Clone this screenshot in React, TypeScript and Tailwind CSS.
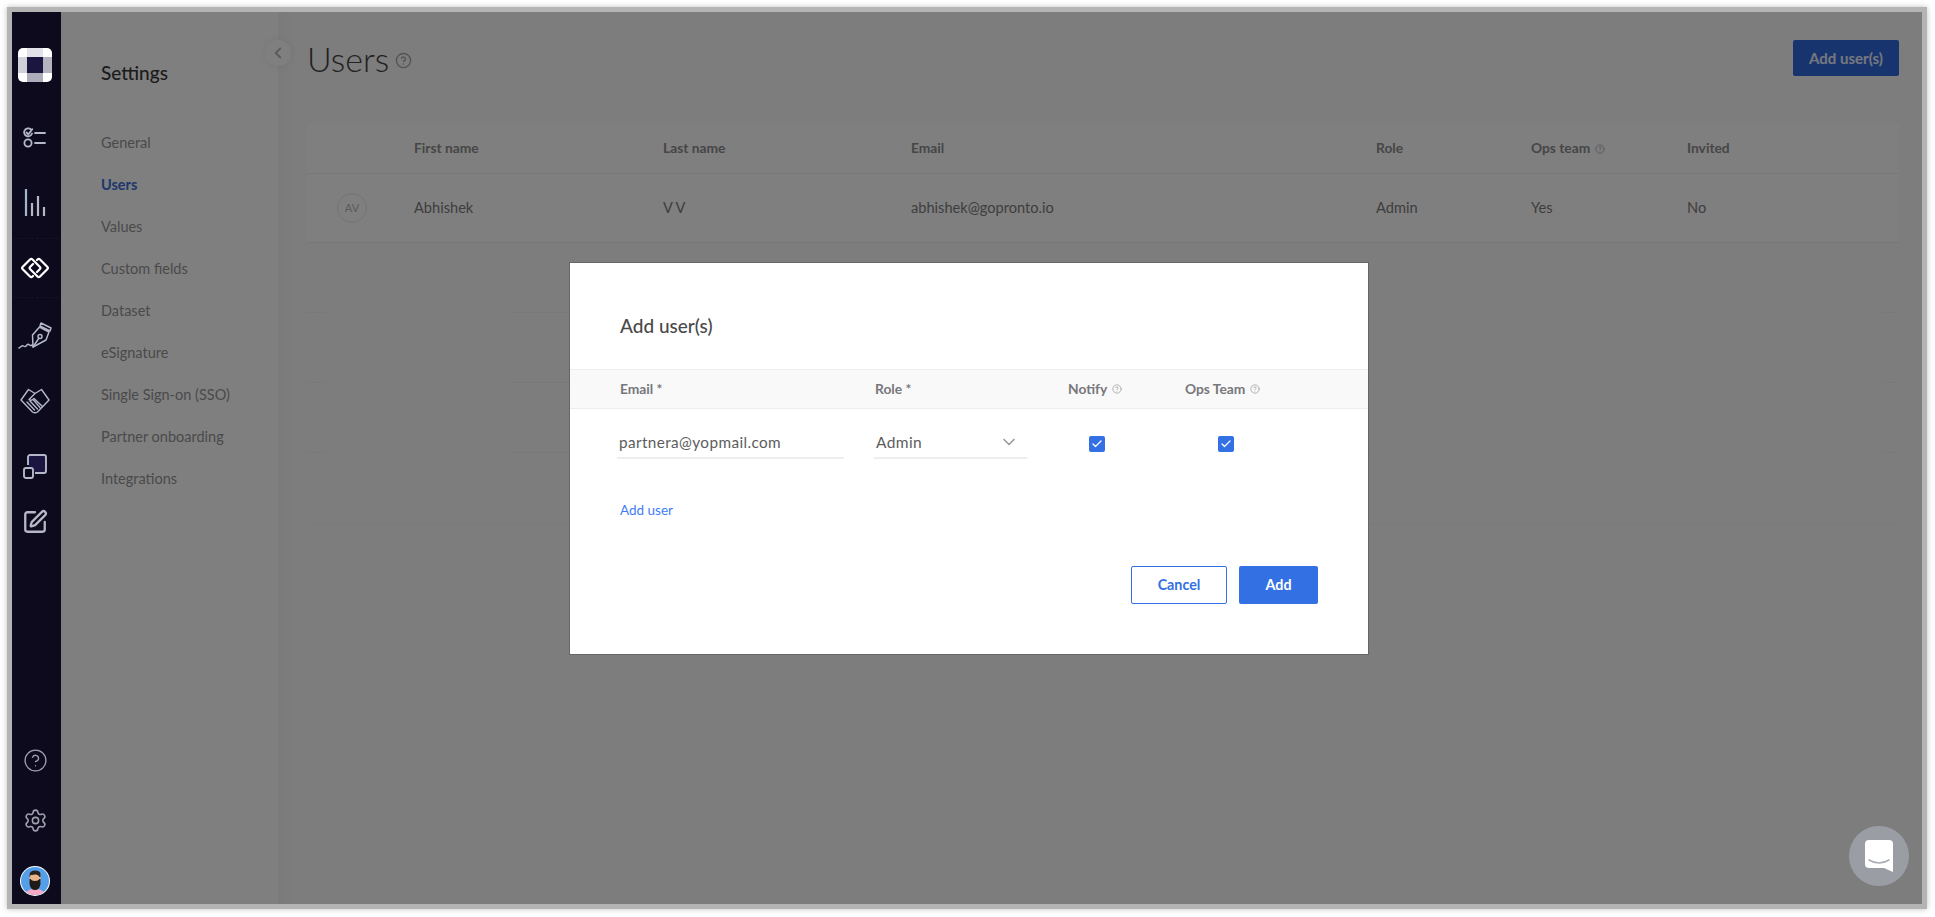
import { Check, ChevronDown, ChevronLeft, Settings, SquarePen } from 'lucide-react';

const navItems = [
  'General',
  'Users',
  'Values',
  'Custom fields',
  'Dataset',
  'eSignature',
  'Single Sign-on (SSO)',
  'Partner onboarding',
  'Integrations',
];

const HelpIcon = ({ className, strokeWidth = 2 }: { className?: string; strokeWidth?: number }) => (
  <svg viewBox="0 0 24 24" fill="none" stroke="currentColor" strokeWidth={strokeWidth} strokeLinecap="round" strokeLinejoin="round" className={className}>
    <circle cx="12" cy="12" r="10" />
    <path d="M9.09 9a3 3 0 0 1 5.83 1c0 2-3 3-3 3" />
    <path d="M12 17h.01" />
  </svg>
);

const Logo = () => (
  <svg viewBox="0 0 34 34" className="h-[34px] w-[34px]">
    <defs>
      <clipPath id="logo-clip">
        <rect width="34" height="34" rx="5" />
      </clipPath>
    </defs>
    <g clipPath="url(#logo-clip)">
      <rect width="34" height="34" fill="#ffffff" />
      <rect x="9" y="0" width="16" height="9" fill="#e2e2ea" />
      <rect x="0" y="9" width="9" height="16" fill="#d0d0d8" />
      <rect x="25" y="9" width="9" height="16" fill="#b4b4c0" />
      <rect x="9" y="25" width="16" height="9" fill="#acacba" />
      <rect x="9" y="9" width="16" height="16" fill="#1b163f" />
    </g>
  </svg>
);

const ListIcon = () => (
  <svg viewBox="0 0 24 22" fill="none" stroke="#b4b8c8" strokeWidth="1.8" strokeLinecap="round" className="h-[22px] w-[24px]">
    <path d="M8 2.5a4 4 0 1 0 1 4" />
    <path d="M3.5 5.5l1.8 1.8 4-5" />
    <path d="M12 6h10" />
    <circle cx="5" cy="16" r="3.6" />
    <path d="M12 16h10" />
  </svg>
);

const BarsIcon = () => (
  <svg viewBox="0 0 24 27" fill="none" strokeWidth="2.2" className="h-[27px] w-[24px]">
    <path d="M3 0v27" stroke="#a6b4cc" />
    <path d="M9 14v13" stroke="#b4b8c4" />
    <path d="M15 7v20" stroke="#b4b8c4" />
    <path d="M21 18v9" stroke="#b4b8c4" />
  </svg>
);

const LinkIcon = () => (
  <svg viewBox="0 0 30 24" fill="none" stroke="#ffffff" strokeWidth="2.2" strokeLinejoin="round" strokeLinecap="round" className="h-[24px] w-[30px]">
    <path d="M13 20l-.5.5Q11.25 21.75 10 20.5L2.75 13.25Q1.5 12 2.75 10.75L10 3.5Q11.25 2.25 12.5 3.5L19.75 10.75Q21 12 19.75 13.25L17 16" />
    <path d="M17 4l.5-.5Q18.75 2.25 20 3.5L27.25 10.75Q28.5 12 27.25 13.25L20 20.5Q18.75 21.75 17.5 20.5L10.25 13.25Q9 12 10.25 10.75L13 8" />
  </svg>
);

const PenIcon = () => (
  <svg viewBox="0 0 34 28" fill="none" stroke="#b4b8c8" strokeWidth="1.5" strokeLinejoin="round" strokeLinecap="round" className="h-[28px] w-[34px]">
    <path d="M23 1l10 5-1 3-10-5z" />
    <path d="M21.500 5l9.500 5-3 8-13 7-.5-12z" />
    <path d="M15 25l6-9" />
    <circle cx="22" cy="14.500" r="2" />
    <path d="M1 26c2-1 3-3 4.500-2s2 1 3-.5 2-1.500 3-.5 2 .5 3 0" />
  </svg>
);

const HandshakeIcon = () => (
  <svg viewBox="0 0 30 26" fill="none" stroke="#b4b8c8" strokeWidth="1.4" strokeLinejoin="round" strokeLinecap="round" className="h-[26px] w-[30px]">
    <path d="M8.500 1.500l6.500 4 6.500-4L29 12 17.500 24q-2.500 1.500-5 0L1 12z" />
    <path d="M15 5.500l-6 6q2 2 5-1l8.500 8" />
    <path d="M7 14l7.500 8" />
    <path d="M10 13l7.500 8" />
    <path d="M13.500 12l6.500 7.500" />
  </svg>
);

const SquaresIcon = () => (
  <svg viewBox="0 0 24 25" fill="none" stroke="#b4b8c8" strokeWidth="1.9" strokeLinejoin="round" className="h-[25px] w-[24px]">
    <path d="M5 11V3a2 2 0 0 1 2-2h14a2 2 0 0 1 2 2v14a2 2 0 0 1-2 2H12" fill="#1a1640" />
    <rect x="1" y="14" width="9" height="10" rx="2" />
  </svg>
);

const Avatar = () => (
  <svg viewBox="0 0 30 30" className="h-[30px] w-[30px]">
    <defs>
      <clipPath id="avatar-clip">
        <circle cx="15" cy="15" r="14" />
      </clipPath>
    </defs>
    <circle cx="15" cy="15" r="15" fill="#ffffff" />
    <g clipPath="url(#avatar-clip)">
      <rect width="30" height="30" fill="#549fe9" />
      <path d="M5 30c0-5 4-7 10-7s10 2 10 7z" fill="#f5a9c4" />
      <rect x="9.500" y="6" width="11" height="13" rx="4" fill="#e8b48c" />
      <path d="M9.500 9q0-4.500 5.500-4.500t5.500 3.500v3h-1q-1-3-4.500-2.500t-4.500.5l-.5 2h-.5z" fill="#2b2320" />
      <path d="M9.500 13h1q1 2 4.500 2t4.500-2h1v5q-1 6-5.500 6t-5.500-6z" fill="#1f1a18" />
    </g>
  </svg>
);

const Sidebar = () => (
  <aside className="relative z-20 flex h-full w-[49px] shrink-0 flex-col items-center bg-[#0c0a1c] pt-[36px] pb-[8px] pr-[3px]">
    <Logo />
    <div className="mt-[45px]"><ListIcon /></div>
    <div className="mt-[40px]"><BarsIcon /></div>
    <div className="mt-[22px] flex h-[60px] w-full items-center justify-center border-y border-dashed border-[#15132a]">
      <LinkIcon />
    </div>
    <div className="mt-[24px]"><PenIcon /></div>
    <div className="mt-[38px]"><HandshakeIcon /></div>
    <div className="mt-[40px]"><SquaresIcon /></div>
    <SquarePen className="mt-[30px] h-[26px] w-[26px] text-[#b6b8c6]" strokeWidth={2.1} />
    <div className="mt-auto flex flex-col items-center">
      <HelpIcon className="h-[25px] w-[25px] text-[#a0a0ae]" strokeWidth={1.3} />
      <Settings className="mt-[35px] h-[25px] w-[25px] text-[#a0a0ae]" strokeWidth={1.5} />
      <div className="mt-[33px]"><Avatar /></div>
    </div>
  </aside>
);

const SettingsNav = () => (
  <nav className="relative z-10 w-[217px] shrink-0 bg-white pl-[40px] pt-[48px]">
    <h2 className="text-[19px] leading-[26px] font-medium text-[#383838]">Settings</h2>
    <ul className="mt-[36px]">
      {navItems.map((item) => (
        <li
          key={item}
          className={`flex h-[42px] items-center text-[14.500px] ${item === 'Users' ? 'font-bold text-[#3f6fd8]' : 'text-[#949494]'}`}
        >
          {item}
        </li>
      ))}
    </ul>
  </nav>
);

const UsersTable = () => (
  <div className="mt-[48px]">
    <div className="grid h-[50px] grid-cols-[107px_249px_248px_465px_155px_156px_1fr] items-center border-b border-[#f0f0f0] bg-white text-[13.800px] font-bold text-[#8c8c8c]">
      <div />
      <div>First name</div>
      <div>Last name</div>
      <div>Email</div>
      <div>Role</div>
      <div className="flex items-center gap-[5px]">
        Ops team
        <HelpIcon className="h-[10px] w-[10px] text-[#aaaaaa]" />
      </div>
      <div>Invited</div>
    </div>
    <div className="grid h-[69px] grid-cols-[107px_249px_248px_465px_155px_156px_1fr] items-center border-b border-[#efefef] bg-white text-[14.600px] text-[#7c7c7c]">
      <div className="pl-[30px]">
        <div className="flex h-[30px] w-[30px] items-center justify-center rounded-full border border-[#e8e8e8] text-[11px] text-[#b5b5b5]">AV</div>
      </div>
      <div>Abhishek</div>
      <div>V V</div>
      <div>abhishek@gopronto.io</div>
      <div>Admin</div>
      <div>Yes</div>
      <div>No</div>
    </div>
    {[0, 1, 2].map((row) => (
      <div key={row} className="flex h-[70px] items-end">
        <div className="h-px w-[20px] bg-[#f2f2f2]" />
        <div className="ml-[183px] h-px w-[861px] bg-[#f2f2f2]" />
        <div className="ml-[511px] h-px w-[17px] bg-[#f2f2f2]" />
      </div>
    ))}
    <div className="mt-[70px] h-px bg-[#f5f5f5]" />
  </div>
);

const AddUserModal = () => (
  <div className="ml-[4px] mt-[251px] h-[391px] w-[798px] bg-white shadow-[0_0_0_1px_#666666]">
    <div className="h-[106px] pl-[50px] pt-[50px] text-[19px] leading-[26px] font-medium text-[#4a4a4a]">Add user(s)</div>
    <div className="grid h-[40px] grid-cols-[255px_193px_117px_1fr] items-center border-y border-[#eeeeee] bg-[#f9f9f9] pl-[50px] text-[13.800px] font-bold text-[#77777c]">
      <div>Email *</div>
      <div>Role *</div>
      <div className="flex items-center gap-[5px]">
        Notify
        <HelpIcon className="h-[10px] w-[10px] text-[#a5a5a5]" />
      </div>
      <div className="flex items-center gap-[5px]">
        Ops Team
        <HelpIcon className="h-[10px] w-[10px] text-[#a5a5a5]" />
      </div>
    </div>
    <div className="flex h-[50px] items-start pl-[47px] pt-[18px]">
      <div className="h-[32px] w-[227px] border-b-2 border-[#eeeeee] pl-[2px] text-[15.300px] leading-[30px] tracking-[0.4px] text-[#5c5c5c]">partnera@yopmail.com</div>
      <div className="ml-[30px] flex h-[32px] w-[153px] items-center justify-between border-b-2 border-[#eeeeee] pl-[2px] pr-[8px] text-[15.500px] leading-[30px] tracking-[0.4px] text-[#5c5c5c]">
        Admin
        <ChevronDown className="h-[20px] w-[20px] text-[#9b9b9b]" strokeWidth={2} />
      </div>
      <div className="ml-[62px] mt-[9px] flex h-[16px] w-[16px] items-center justify-center rounded-[2px] bg-[#3370e3]">
        <Check className="h-[12px] w-[12px] text-white" strokeWidth={2.5} />
      </div>
      <div className="ml-[113px] mt-[9px] flex h-[16px] w-[16px] items-center justify-center rounded-[2px] bg-[#3370e3]">
        <Check className="h-[12px] w-[12px] text-white" strokeWidth={2.5} />
      </div>
    </div>
    <div className="mt-[42px] pl-[50px] text-[13.500px] leading-[18px] text-[#3f7cf4]">Add user</div>
    <div className="mt-[47px] flex justify-end gap-[12px] pr-[50px] text-[14.300px] font-bold">
      <button className="h-[38px] w-[96px] rounded-[2px] border border-[#3370e3] bg-white text-[#3370e3]">Cancel</button>
      <button className="h-[38px] w-[79px] rounded-[2px] bg-[#3370e3] text-white">Add</button>
    </div>
  </div>
);

const ChatBubble = () => (
  <div className="absolute bottom-[18px] right-[13px] z-30 flex h-[60px] w-[60px] items-center justify-center rounded-full bg-[#9a9ea4]">
    <svg viewBox="0 0 28 32" className="h-[32px] w-[28px]">
      <path d="M4 0h20a4 4 0 0 1 4 4v28l-9-4H4a4 4 0 0 1-4-4V4a4 4 0 0 1 4-4z" fill="#ffffff" />
      <path d="M4 20q10 6 20 0" fill="none" stroke="#a9acb1" strokeWidth="1.500" strokeLinecap="round" />
    </svg>
  </div>
);

export default function App() {
  return (
    <div className="h-[917px] w-[1935px] overflow-hidden bg-white pl-[7px] pr-[8px] pt-[7px] pb-[8px] font-[Lato,sans-serif]">
      <div className="h-full border-[5px] border-[#b4b4b4] shadow-[0_0_6px_rgba(0,0,0,0.25)]">
        <div className="relative flex h-full">
          <Sidebar />
          <SettingsNav />
          <main className="min-w-0 flex-1 bg-[#fafafa] pl-[29px] pr-[23px] pt-[28px] shadow-[inset_24px_0_24px_-24px_rgba(0,0,0,0.04)]">
            <div className="flex h-[36px] items-center justify-between">
              <div className="mt-[2px] flex items-center gap-[6px]">
                <h1 className="text-[34px] leading-[40px] font-light text-[#444444]">Users</h1>
                <HelpIcon className="mt-[2px] h-[17px] w-[17px] text-[#aaaaaa]" />
              </div>
              <button className="h-[36px] w-[106px] rounded-[2px] bg-[#3069dd] text-[15px] font-bold text-white/90">Add user(s)</button>
            </div>
            <UsersTable />
          </main>
          {/* collapse toggle sits on the seam of nav and content */}
          <div className="absolute left-[253px] top-[28px] z-10 flex h-[26px] w-[26px] items-center justify-center rounded-full bg-white shadow-[0_0_8px_rgba(0,0,0,0.08)]">
            <ChevronLeft className="h-[18px] w-[18px] text-[#b5b5b5]" strokeWidth={2.5} />
          </div>
          <div className="absolute inset-0 z-10 flex justify-center bg-black/50">
            <AddUserModal />
          </div>
          <ChatBubble />
        </div>
      </div>
    </div>
  );
}
